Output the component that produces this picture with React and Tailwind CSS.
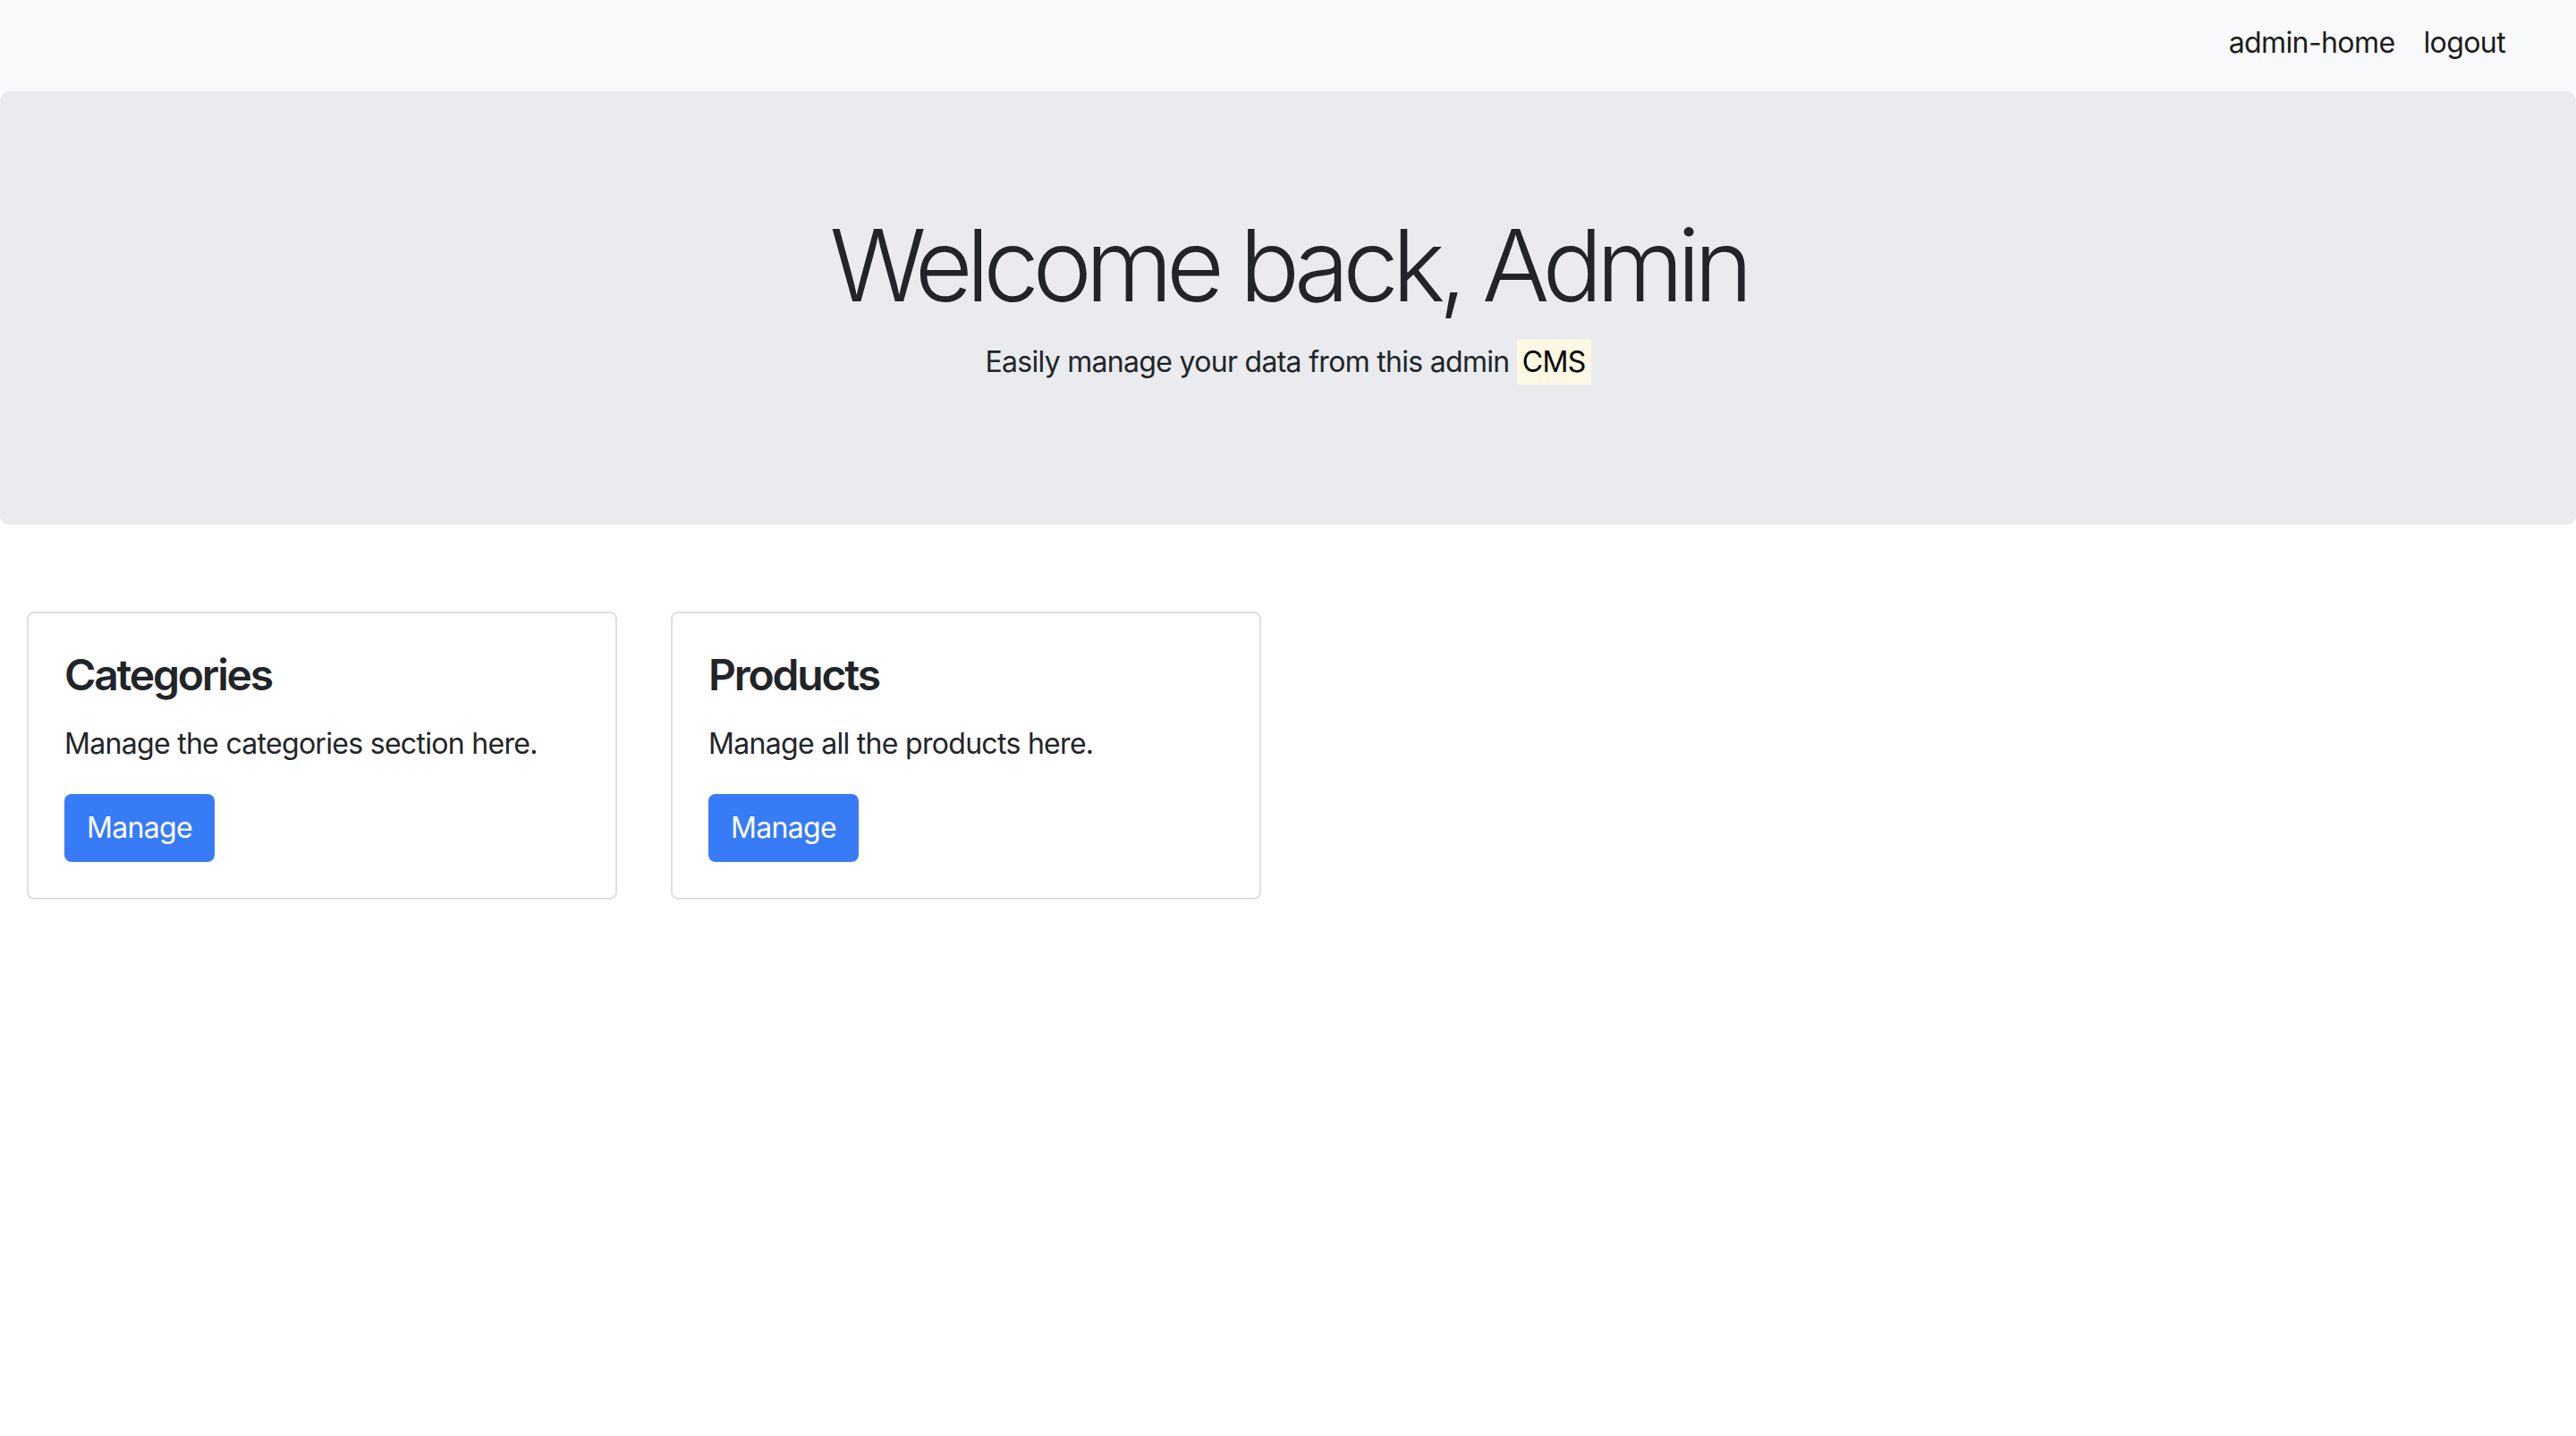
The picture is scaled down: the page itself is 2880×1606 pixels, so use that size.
import React from "react";

const font = { fontFamily: "Inter, 'Noto Sans', 'Liberation Sans', sans-serif" };

function Card({ title, text }) {
  return (
    <div className="px-[30px]">
      <div className="w-[660px] border-2 border-[#dfdfdf] rounded-[8px] bg-white p-[40px]">
        <h4 className="text-[48px] leading-[58px] font-semibold tracking-[-2.2px] text-[#212529] mb-[24px]">{title}</h4>
        <p className="text-[32px] leading-[48px] tracking-[-0.7px] text-[#212529] mb-[32px]">{text}</p>
        <button className="h-[76px] px-[25px] rounded-[8px] bg-[#387bf6] text-white text-[32px] leading-[48px] tracking-[-0.7px]">
          Manage
        </button>
      </div>
    </div>
  );
}

export default function App() {
  return (
    <div style={font} className="min-h-[1606px] bg-white text-[#212529]">
      <nav className="h-[102px] bg-[#f8f9fa] flex items-center justify-end pr-[63px] pb-[6px]">
        <a className="px-[16px] text-[32px] leading-[48px] tracking-[-0.6px] text-[#1c1c1c]">admin-home</a>
        <a className="px-[16px] text-[32px] leading-[48px] tracking-[-0.6px] text-[#1c1c1c]">logout</a>
      </nav>
      <div className="h-[485px] bg-[#e9ebee] rounded-[10px] pt-[127px] text-center">
        <h1 className="text-[112px] leading-[134px] font-light tracking-[-7.3px] text-[#212529] mb-[18px]">
          Welcome back, Admin
        </h1>
        <p className="text-[32px] leading-[48px] tracking-[-0.7px] text-[#212529]">
          Easily manage your data from this admin{" "}
          <mark className="bg-[#fcf8e3] text-black px-[6px] py-[6px]">CMS</mark>
        </p>
      </div>
      <div className="flex pt-[97px]">
        <Card title="Categories" text="Manage the categories section here." />
        <Card title="Products" text="Manage all the products here." />
      </div>
    </div>
  );
}
